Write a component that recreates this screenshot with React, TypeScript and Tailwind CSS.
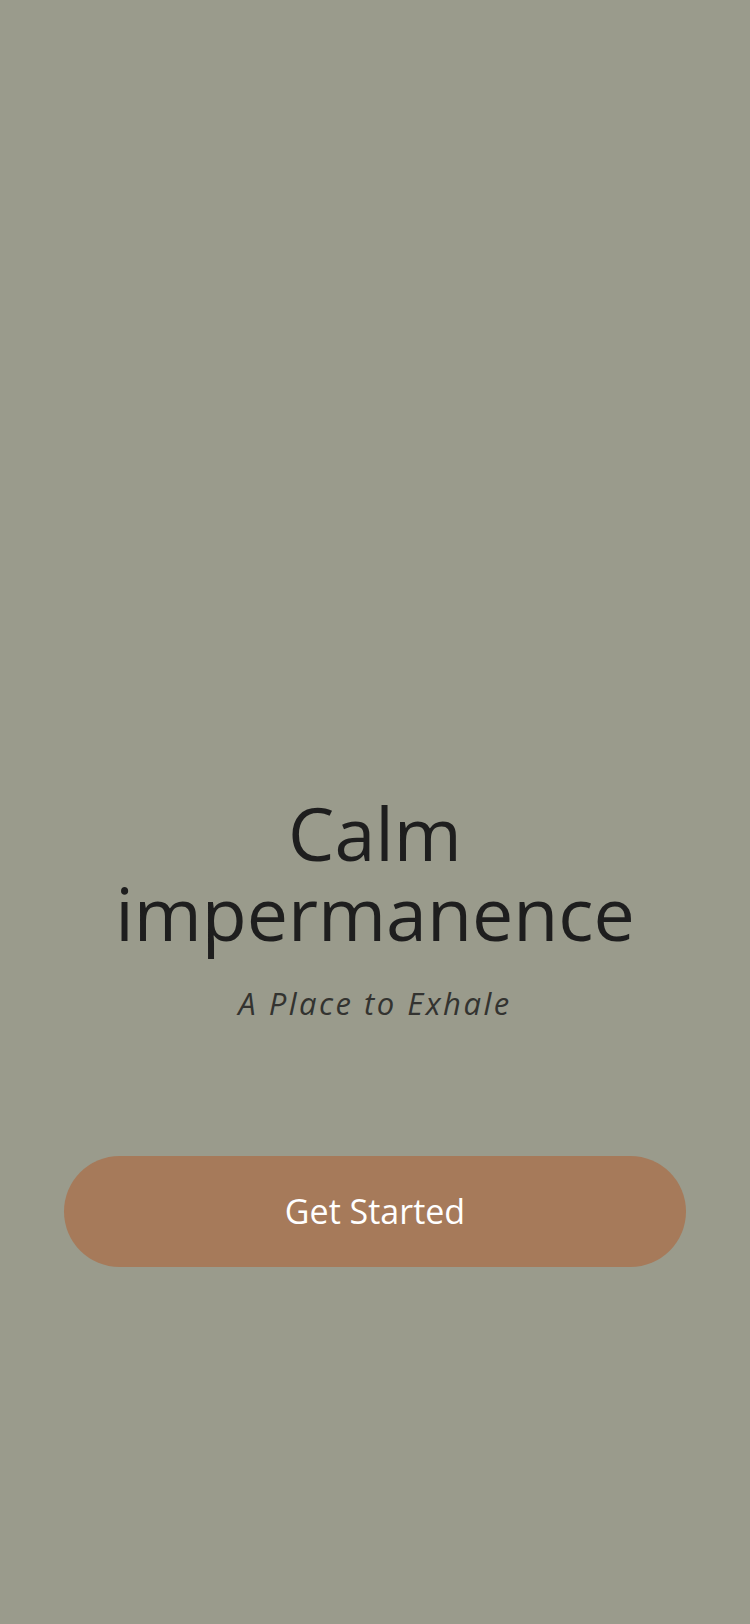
export default function App() {
  return (
    <main
      className="flex min-h-screen flex-col items-center bg-[#9a9b8c] px-16 pt-[793px] text-center"
      style={{ fontFamily: '"Open Sans", "Noto Sans", sans-serif' }}
    >
      <h1 className="text-[73.5px] font-normal leading-[80px] text-[#1e1e1e]">
        Calm
        <br />
        impermanence
      </h1>
      <p className="mt-[30px] text-[31px] italic leading-[40px] tracking-[0.08em] text-[#333330]">
        A Place to Exhale
      </p>
      <button className="mt-[133px] h-[111px] w-full rounded-full bg-[#a67a5a] text-[34px] text-white">
        Get Started
      </button>
    </main>
  );
}
